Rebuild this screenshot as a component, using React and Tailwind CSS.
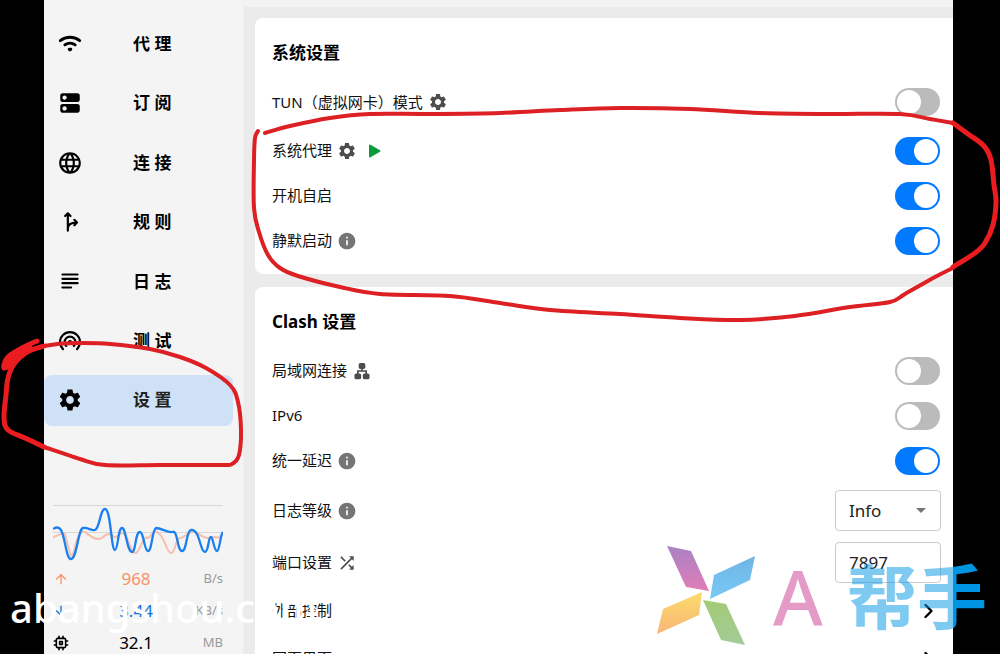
import React from "react";
import { MdLanguage, MdSettings, MdInfo, MdShuffle, MdArrowDropDown, MdArrowUpward, MdArrowDownward } from "react-icons/md";

function Line({ children, width = 2, size = "size-[26px]" }) {
  return (
    <svg viewBox="0 0 24 24" className={size} fill="none" stroke="currentColor" strokeWidth={width} strokeLinecap="round" strokeLinejoin="round" aria-hidden="true">
      {children}
    </svg>
  );
}

const nav = [
  ["代 理", <Line width={2.6}><path d="M3 8.900c5.200-4.200 12.800-4.200 18 0M7.200 12.900c2.800-2.200 6.800-2.200 9.600 0" /><path d="M11.200 16.800h1.600l-.8.8z" /></Line>],
  ["订 阅", <svg viewBox="0 0 24 24" className="size-[26px]" fill="currentColor" aria-hidden="true"><path d="M19 13H5c-1.100 0-2 .9-2 2v4c0 1.100.9 2 2 2h14c1.100 0 2-.9 2-2v-4c0-1.100-.9-2-2-2M7 19c-1.100 0-2-.9-2-2s.9-2 2-2 2 .9 2 2-.9 2-2 2M19 3H5c-1.100 0-2 .9-2 2v4c0 1.100.9 2 2 2h14c1.100 0 2-.9 2-2V5c0-1.100-.9-2-2-2M7 9c-1.100 0-2-.9-2-2s.9-2 2-2 2 .9 2 2-.9 2-2 2" /></svg>],
  ["连 接", <MdLanguage className="size-[26px]" />],
  ["规 则", <Line><path d="M10 20V5M7.500 6.500L10 4l2.500 2.500M10 18c0-4 3-5.500 8-5.500M16 10l2.500 2.500L16 15" /></Line>],
  ["日 志", <Line><path d="M5 6h14M5 10h14M5 14h14M5 18h8" /></Line>],
  ["测 试", <Line><path d="M5.500 19.500a9.200 9.200 0 1 1 13 0M8.500 16.500a5 5 0 1 1 7 0" /><circle cx="12" cy="13" r="1" fill="currentColor" /></Line>],
  ["设 置", <MdSettings className="size-[26px]" />],
];

const chip = (
  <Line size="size-4" width={2.4}>
    <rect x="5" y="5" width="14" height="14" rx="2" />
    <rect x="10" y="10" width="4" height="4" />
    <path d="M9 2v3M15 2v3M9 19v3M15 19v3M2 9h3M2 15h3M19 9h3M19 15h3" />
  </Line>
);

function Sidebar() {
  return (
    <aside className="flex w-[200px] shrink-0 flex-col border-r border-[#eeeeee] bg-[#f4f4f4] pt-[18px]">
      <nav className="flex h-[408px] shrink-0 flex-col gap-2 pr-[10px]">
        {nav.map(([label, icon], i) => (
          <a key={label} href="#" aria-current={i === 6 ? "page" : undefined} className={"flex flex-1 items-center rounded-lg pl-[13px] text-[17px] font-bold " + (i === 6 ? "bg-[#cfe1f6] text-[#222222]" : "text-black")}>
            <span className="w-[76px] text-black">{icon}</span>
            {label}
          </a>
        ))}
      </nav>
      <div className="mt-[74px] pr-5 pl-[9px]">
        <svg viewBox="0 0 170 64" className="-mb-px h-16 w-full" fill="none" aria-hidden="true">
          <path d="M0 5.500h170M0 32.500h170" stroke="#d8d8d8" />
          <path d="M0 37C5 36 6 33 12 34C18 60 19 60 22 47C25 33 29 30 32 32C38 37 45 42 50 37C54 33 58 33 61 37C64 39 66 32 70 33C76 36 77 54 83 53C88 51 89 35 95 38C100 36 99 29 104 32C112 35 113 53 118 53C123 53 122 37 128 38C136 35 136 30 142 32C150 36 153 40 158 37C163 36 166 41 170 33" stroke="#f6bfae" strokeWidth="2" />
          <path d="M0 29C3 27 6 27 8 30C12 36 13 59 18 59C24 59 25 29 30 28C35 27 38 31 42 30C47 28 47 9 52 9C58 9 58 50 62 50C65 50 65 28 69 28C73 28 74 52 79 52C83 52 82 32 87 32C91 32 91 51 95 51C99 51 99 30 103 28C108 28 115 33 119 32C125 29 124 51 129 51C134 51 133 31 138 30C147 29 147 52 152 52C156 51 155 37 158 37C160 37 161 51 164 51C167 50 167 35 170 32" stroke="#1a80ee" strokeWidth="2.300" />
        </svg>
        {[
          [<MdArrowUpward />, "968", "B/s", "text-[#fa9068]"],
          [<MdArrowDownward />, "3.44", "KB/s", "text-[#1a73d9]"],
          [chip, "32.1", "MB", "text-black"],
        ].map(([icon, value, unit, tone]) => (
          <div key={value} className={"flex h-8 items-center text-[17px] " + tone}>
            <span className="w-9 text-[16px]">{icon}</span>
            <span className="flex-1 text-center">{value}</span>
            <span className="w-10 text-right text-[13px] text-[#999999]">{unit}</span>
          </div>
        ))}
      </div>
    </aside>
  );
}

function Switch({ id, on }) {
  return (
    <span className="relative inline-flex h-7 w-[45px]">
      <input id={id} type="checkbox" role="switch" defaultChecked={on} className="peer h-7 w-[45px] appearance-none rounded-full bg-[#bbbbbb] checked:bg-[#027aff]" />
      <span className="pointer-events-none absolute top-[2px] left-[2px] size-6 rounded-full bg-white peer-checked:left-[19px]" />
    </span>
  );
}

function Row({ id, label, icon, children, size = "h-[45px]" }) {
  return (
    <div className={"flex shrink-0 items-center justify-between pr-[13px] " + size}>
      <div className="flex items-center gap-[5px]">
        <label htmlFor={id} className="text-[15px] text-[#111111]">{label}</label>
        {icon}
      </div>
      {children}
    </div>
  );
}

const gear = <button aria-label="设置" className="text-[#4d4d4d]"><MdSettings className="size-5" /></button>;
const info = <MdInfo className="size-5 text-[#757575]" />;
const play = (
  <svg viewBox="0 0 24 24" className="size-6" fill="#0a9b3b" stroke="#0a9b3b" strokeWidth="2" strokeLinejoin="round" aria-hidden="true">
    <path d="M8 6.500v11l9.500-5.500z" />
  </svg>
);
const lan = (
  <svg viewBox="0 0 24 24" className="size-5 text-[#4d4d4d]" fill="currentColor" aria-hidden="true">
    <rect x="8" y="2.500" width="8" height="7" rx="2" />
    <rect x="3" y="15" width="8" height="7" rx="2" />
    <rect x="13" y="15" width="8" height="7" rx="2" />
    <path d="M12 9v3M7 15.500V12h10v3.500" fill="none" stroke="currentColor" strokeWidth="2" />
  </svg>
);
const chevron = <Line size="size-6" width={2.4}><path d="M9.500 6l6 6-6 6" /></Line>;

// Builds a smooth path through the given points.
function smooth(points) {
  let d = "M" + points[0].join(" ");
  for (let i = 0; i < points.length - 1; i++) {
    const a = points[i - 1] || points[i];
    const b = points[i];
    const c = points[i + 1];
    const e = points[i + 2] || c;
    d += `C${b[0] + (c[0] - a[0]) / 6} ${b[1] + (c[1] - a[1]) / 6} ${c[0] - (e[0] - b[0]) / 6} ${c[1] - (e[1] - b[1]) / 6} ${c[0]} ${c[1]}`;
  }
  return d;
}

const strokes = [
  [[265, 133], [290, 126], [330, 118], [370, 114], [430, 114], [500, 113], [560, 110], [620, 108], [690, 109], [760, 113], [830, 114], [900, 114], [930, 119], [953, 123]],
  [[258, 131], [255, 138], [254, 160], [254, 208], [259, 232], [268, 255], [280, 268], [298, 276], [340, 287], [380, 294], [450, 296], [500, 303], [550, 310], [620, 314], [680, 318], [740, 320], [795, 316], [850, 307], [890, 302], [905, 294], [935, 277], [953, 268]],
  [[75, 343], [110, 344], [150, 349], [180, 357], [206, 368], [230, 385], [238, 402], [241, 430], [239, 455], [232, 464], [220, 465], [160, 465], [105, 465], [80, 459], [44, 447]],
];

const bold = [
  [[953, 123], [968, 134], [984, 146], [991, 160], [994, 185], [996, 202], [993, 225], [985, 243], [975, 253], [953, 267]],
  [[44, 447], [25, 438], [8, 430], [4, 418], [6, 395], [8, 378], [14, 364], [27, 352], [44, 346]],
  [[37, 341], [24, 347], [8, 357], [4, 368], [14, 362], [30, 348], [18, 354], [7, 366]],
];

export default function App() {
  return (
    <div className="relative flex h-screen overflow-hidden bg-black pr-[47px] pl-[44px] font-['Noto_Sans','Noto_Sans_CJK_SC',sans-serif] text-black">
      <Sidebar />
      <main className="flex min-w-0 flex-1 flex-col gap-[13px] overflow-hidden border-t-[7px] border-[#f3f3f3] bg-[#ebebeb] pt-[11px] pl-[11px]">
        <section className="shrink-0 rounded-l-lg bg-white pt-2 pb-[11px] pl-[17px]">
          <h2 className="flex h-[53px] items-center text-[17px] font-bold">系统设置</h2>
          <Row id="tun" label="TUN（虚拟网卡）模式" icon={gear} size="mb-[3px] h-[46px]"><Switch id="tun" /></Row>
          <Row id="proxy" label="系统代理" icon={<>{gear}{play}</>}><Switch id="proxy" on /></Row>
          <Row id="boot" label="开机自启"><Switch id="boot" on /></Row>
          <Row id="silent" label="静默启动" icon={info}><Switch id="silent" on /></Row>
        </section>
        <section className="shrink-0 rounded-tl-lg bg-white pt-2 pl-[17px]">
          <h2 className="flex h-[53px] items-center text-[17px] font-bold">Clash 设置</h2>
          <Row id="lan" label="局域网连接" icon={lan}><Switch id="lan" /></Row>
          <Row id="ipv6" label="IPv6"><Switch id="ipv6" /></Row>
          <Row id="delay" label="统一延迟" icon={info}><Switch id="delay" on /></Row>
          <Row id="level" label="日志等级" icon={info} size="h-[55px]">
            <div className="relative -mr-px flex h-[41px] w-[106px]">
              <select id="level" className="w-full appearance-none rounded border border-[#cccccc] bg-white pl-[13px] text-[17px] text-[#222222]"><option>Info</option></select>
              <MdArrowDropDown className="pointer-events-none absolute top-2 right-2 size-6 text-[#757575]" />
            </div>
          </Row>
          <Row id="port" label="端口设置" icon={<MdShuffle className="size-5 text-[#4d4d4d]" />} size="h-[49px]">
            <input id="port" defaultValue="7897" className="-mr-px h-[41px] w-[106px] rounded border border-[#cccccc] bg-white pl-[13px] text-[17px] text-[#222222]" />
          </Row>
          <Row label="外部控制" size="h-[47px]"><button aria-label="外部控制">{chevron}</button></Row>
          <Row label="网页界面" size="h-[49px]"><button aria-label="网页界面">{chevron}</button></Row>
        </section>
      </main>

      <div className="pointer-events-none absolute top-[580px] left-[10px] text-[40px] leading-[56px] font-medium text-white">abangshou.com</div>
      <svg viewBox="0 0 1000 654" className="pointer-events-none absolute top-0 left-0 w-[1000px]" fill="none" aria-hidden="true">
        <defs>
          <linearGradient id="pink" x2="0" y2="1"><stop stopColor="#a982c3" /><stop offset="1" stopColor="#e17db8" /></linearGradient>
          <linearGradient id="blue" x2="0" y2="1"><stop stopColor="#6fb4e4" /><stop offset="1" stopColor="#78caf5" /></linearGradient>
          <linearGradient id="gold" x2="0" y2="1"><stop stopColor="#fbdc6c" /><stop offset="1" stopColor="#f8b576" /></linearGradient>
          <linearGradient id="green" x2="0" y2="1"><stop stopColor="#a2cb75" /><stop offset="1" stopColor="#a3cb98" /></linearGradient>
        </defs>
        <path fill="url(#pink)" d="M667 546l24 5 18 40-23-4z" />
        <path fill="url(#blue)" d="M714 575l41-19-5 24-40 19z" />
        <path fill="url(#gold)" d="M702 592l-39 17-6 25 42-19z" />
        <path fill="url(#green)" d="M703 600l23 4 19 41-24-5z" />
        <g stroke="#dc2024" strokeWidth="4" strokeLinecap="round" strokeLinejoin="round">
          {strokes.map((points, i) => <path key={i} d={smooth(points)} />)}
          <path d="M44 346C54 344 64 343 75 343" />
        </g>
        <g stroke="#ea1c20" strokeWidth="5" strokeLinecap="round" strokeLinejoin="round">
          {bold.map((points, i) => <path key={i} d={smooth(points)} />)}
        </g>
      </svg>
      <div className="pointer-events-none absolute top-[544px] left-[773px] flex items-center leading-[106px]">
        <span className="w-[74px] text-[76px] font-medium text-[#e49bc8]">A</span>
        <span className="bg-[linear-gradient(90deg,#0095e380_106px,#0095e3_106px)] bg-clip-text text-[70px] font-bold text-transparent">帮手</span>
      </div>
    </div>
  );
}
